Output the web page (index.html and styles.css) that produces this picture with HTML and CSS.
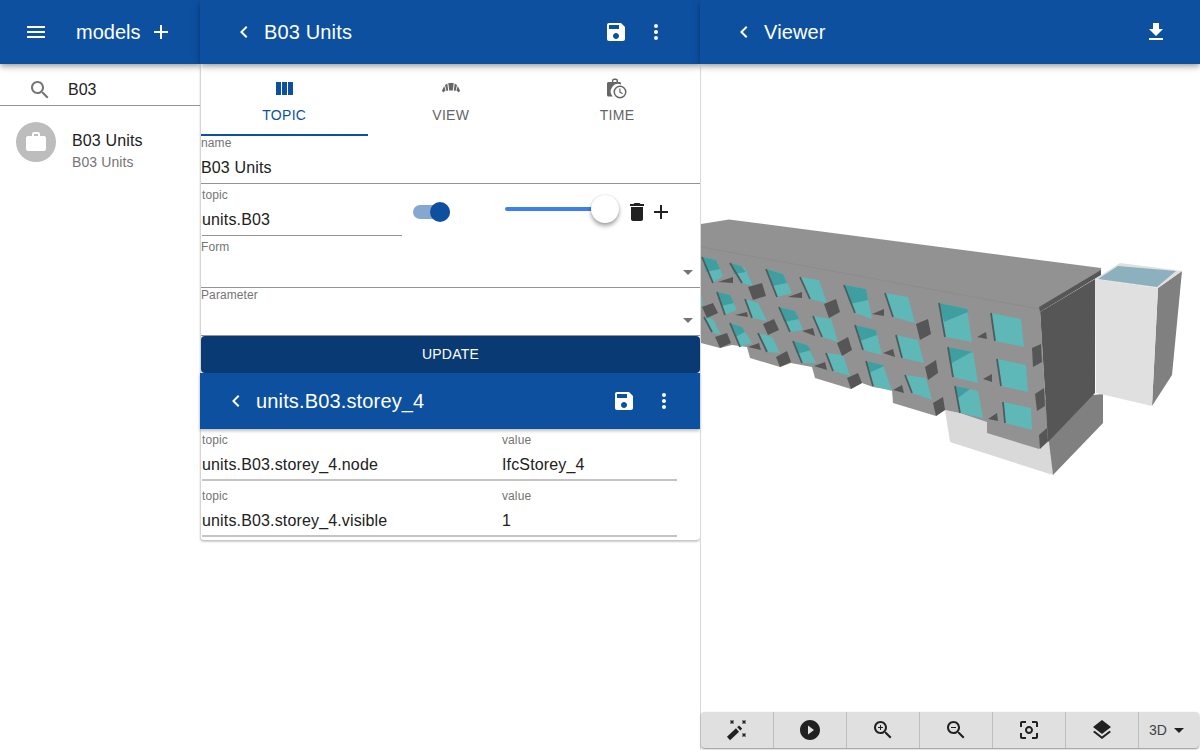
FILE: index.html
```html
<!DOCTYPE html>
<html lang="en">
<head>
<meta charset="utf-8">
<title>B03 Units</title>
<link rel="stylesheet" href="styles.css">
</head>
<body>
<div class="app">
  <section class="col col-left">
    <header class="bar">
      <svg class="ic icon-menu" viewBox="0 0 24 24"><path d="M3 18h18v-2H3v2zm0-5h18v-2H3v2zm0-7v2h18V6H3z"/></svg>
      <span class="bar-title models">models</span>
      <svg class="ic icon-addtop" viewBox="0 0 24 24"><path d="M19 13h-6v6h-2v-6H5v-2h6V5h2v6h6v2z"/></svg>
    </header>
    <div class="search">
      <svg class="ic icon-search" viewBox="0 0 24 24"><path d="M15.5 14h-.79l-.28-.27C15.41 12.59 16 11.11 16 9.5 16 5.91 13.09 3 9.5 3S3 5.91 3 9.5 5.91 16 9.5 16c1.61 0 3.09-.59 4.23-1.57l.27.28v.79l5 4.99L20.49 19l-4.99-5zm-6 0C7.01 14 5 11.99 5 9.5S7.01 5 9.5 5 14 7.01 14 9.5 11.99 14 9.5 14z"/></svg>
      <span class="search-text">B03</span>
    </div>
    <div class="item">
      <div class="avatar"><svg class="ic" viewBox="0 0 24 24"><path d="M20 6h-4V4c0-1.11-.89-2-2-2h-4c-1.11 0-2 .89-2 2v2H4c-1.11 0-1.99.89-1.99 2L2 19c0 1.11.89 2 2 2h16c1.11 0 2-.89 2-2V8c0-1.11-.89-2-2-2zm-6 0h-4V4h4v2z"/></svg></div>
      <div class="item-text">
        <div class="item-title">B03 Units</div>
        <div class="item-sub">B03 Units</div>
      </div>
    </div>
  </section>

  <section class="col col-mid">
    <header class="bar">
      <svg class="ic icon-back" viewBox="0 0 24 24"><path d="M15.41 7.41L14 6l-6 6 6 6 1.41-1.41L10.83 12z"/></svg>
      <span class="bar-title">B03 Units</span>
      <span class="spacer"></span>
      <svg class="ic" viewBox="0 0 24 24"><path d="M17 3H5c-1.11 0-2 .9-2 2v14c0 1.1.89 2 2 2h14c1.1 0 2-.9 2-2V7l-4-4zm-5 16c-1.66 0-3-1.34-3-3s1.34-3 3-3 3 1.34 3 3-1.34 3-3 3zm3-10H5V5h10v4z"/></svg>
      <svg class="ic icon-more" viewBox="0 0 24 24"><path d="M12 8c1.1 0 2-.9 2-2s-.9-2-2-2-2 .9-2 2 .9 2 2 2zm0 2c-1.1 0-2 .9-2 2s.9 2 2 2 2-.9 2-2-.9-2-2-2zm0 6c-1.1 0-2 .9-2 2s.9 2 2 2 2-.9 2-2-.9-2-2-2z"/></svg>
    </header>
    <div class="card">
      <nav class="tabs">
        <div class="tab active">
          <svg class="ic" viewBox="0 0 24 24"><path d="M10 18h5V5h-5v13zm-6 0h5V5H4v13zM16 5v13h5V5h-5z"/></svg>
          <span>Topic</span>
        </div>
        <div class="tab">
          <svg class="ic" viewBox="0 0 24 24"><g transform="translate(0 -1.500)"><path d="M9.300 7.500h5.400l-.9 7.500h-3.600zM6 9.500L8.300 8l.9 7-1.700.5zM18 9.500L15.700 8l-.9 7 1.700.5zM3 15l2.200-4.500 1.400 4.500L4 17zM21 15l-2.200-4.500-1.400 4.500L20 17z"/></g></svg>
          <span>View</span>
        </div>
        <div class="tab">
          <svg class="ic" viewBox="0 0 24 24"><g transform="translate(-2 0)"><path d="M9 3.600c0-1.100 1-2 2.400-2h1.200c1.400 0 2.400.9 2.400 2V5h-1.500V3.800c0-.5-.4-.8-1-.8h-1.200c-.6 0-1 .3-1 .8V5H9zM4 6.500C4 5.700 4.700 5 5.500 5h11c.8 0 1.500.7 1.500 1.500v1a7.500 7.500 0 0 0-8.300 12H5.500C4.700 19.500 4 18.800 4 18z"/><path fill-rule="evenodd" d="M17 8.500a6.500 6.500 0 1 1 0 13 6.500 6.500 0 0 1 0-13zm0 1.500a5 5 0 1 0 0 10 5 5 0 0 0 0-10zm-.7 1.500h1.200v3.200l2.400 1.500-.6 1-3-1.800z"/></g></svg>
          <span>Time</span>
        </div>
      </nav>
      <div class="field">
        <label class="lab">name</label>
        <div class="val">B03 Units</div>
      </div>
      <div class="topic-row">
        <div class="field topic-field">
          <label class="lab">topic</label>
          <div class="val">units.B03</div>
        </div>
        <div class="toggle"><span class="knob"></span></div>
        <div class="slider"><span class="thumb"></span></div>
        <svg class="ic dark icon-trash" viewBox="0 0 24 24"><path d="M6 19c0 1.100.9 2 2 2h8c1.100 0 2-.9 2-2V7H6v12zM19 4h-3.500l-1-1h-5l-1 1H5v2h14V4z"/></svg>
        <svg class="ic dark icon-plus" viewBox="0 0 24 24"><path d="M19 13h-6v6h-2v-6H5v-2h6V5h2v6h6v2z"/></svg>
      </div>
      <div class="field select">
        <label class="lab">Form</label>
        <div class="val empty"></div>
        <span class="caret"></span>
      </div>
      <div class="field select">
        <label class="lab">Parameter</label>
        <div class="val empty"></div>
        <span class="caret"></span>
      </div>
      <button class="update">UPDATE</button>
      <header class="bar sub">
        <svg class="ic icon-back" viewBox="0 0 24 24"><path d="M15.41 7.41L14 6l-6 6 6 6 1.41-1.41L10.83 12z"/></svg>
        <span class="bar-title">units.B03.storey_4</span>
        <span class="spacer"></span>
        <svg class="ic" viewBox="0 0 24 24"><path d="M17 3H5c-1.11 0-2 .9-2 2v14c0 1.1.89 2 2 2h14c1.100 0 2-.9 2-2V7l-4-4zm-5 16c-1.660 0-3-1.340-3-3s1.340-3 3-3 3 1.340 3 3-1.340 3-3 3zm3-10H5V5h10v4z"/></svg>
        <svg class="ic icon-more" viewBox="0 0 24 24"><path d="M12 8c1.100 0 2-.9 2-2s-.9-2-2-2-2 .9-2 2 .9 2 2 2zm0 2c-1.100 0-2 .9-2 2s.9 2 2 2 2-.9 2-2-.9-2-2-2zm0 6c-1.100 0-2 .9-2 2s.9 2 2 2 2-.9 2-2-.9-2-2-2z"/></svg>
      </header>
      <div class="kv">
        <div><label class="lab">topic</label><div class="val">units.B03.storey_4.node</div></div>
        <div><label class="lab">value</label><div class="val">IfcStorey_4</div></div>
      </div>
      <div class="kv">
        <div><label class="lab">topic</label><div class="val">units.B03.storey_4.visible</div></div>
        <div><label class="lab">value</label><div class="val">1</div></div>
      </div>
    </div>
  </section>

  <section class="col col-right">
    <header class="bar">
      <svg class="ic icon-back" viewBox="0 0 24 24"><path d="M15.41 7.41L14 6l-6 6 6 6 1.41-1.41L10.83 12z"/></svg>
      <span class="bar-title">Viewer</span>
      <span class="spacer"></span>
      <svg class="ic icon-dl" viewBox="0 0 24 24"><path d="M19 9h-4V3H9v6H5l7 7 7-7zM5 18v2h14v-2H5z"/></svg>
    </header>
    <div class="canvas">
      <svg class="scene" viewBox="701 64 499 648">
        <!-- lower white block -->
        <polygon class="g-light" points="945,410 950,442 1053,475 1049,430"/>
        <polygon class="g-side" points="1053,475 1103,423 1103,394 1040,400 1049,442"/>
        <!-- tower -->
        <polygon class="g-side" points="1158,288 1182,271 1172,375 1152,406"/>
        <polygon class="g-tower" points="1095,279 1158,288 1152,406 1096,393"/>
        <polygon class="g-frame" points="1120,263 1182,271 1158,288 1095,279"/>
        <polygon class="g-glass" points="1118,266 1176,271 1157,287 1098,279"/>
        <!-- main dark side -->
        <polygon class="g-dark" points="1040,312 1095,279 1095,393 1048,442"/>
        <!-- facade + roof -->
        <polygon class="g-main" points="701,224 729,219.500 1101,268 1101,271 1040,307 1048,442 1039,449 987,433 987,422 960,413 945,410 936,416 893,403 892,390 873,387 862,383 851,389 815,378 812,367 791,363 780,367 750,358 747,347 732,345 720,348 701,343"/>
        <polygon class="g-dark" points="1101,270 1101,275 1040,312 1039,307"/>
        <path class="g-band" d="M701 247L1039 309"/>
        <!-- windows -->
        <g class="wins">
          <polygon points="702,257 716,260 723,276 713,283"/>
          <polygon points="730,263 745,268 753,286 742,283"/>
          <polygon points="766,269 783,274 792,293 777,297"/>
          <polygon points="800,277 819,280 827,303 810,299"/>
          <polygon points="844,285 866,289 872,319 855,313"/>
          <polygon points="885,293 908,297 915,323 893,317"/>
          <polygon points="939,303 967,309 972,342 945,337"/>
          <polygon points="991,313 1021,319 1024,347 995,341"/>
          <polygon points="701,293 703,305 701,306"/>
          <polygon points="717,292 730,295 737,310 725,315"/>
          <polygon points="745,299 758,303 767,321 752,318"/>
          <polygon points="779,307 795,311 803,330 790,332"/>
          <polygon points="813,316 831,319 838,342 822,337"/>
          <polygon points="855,325 876,330 882,355 863,350"/>
          <polygon points="896,335 918,340 924,363 902,358"/>
          <polygon points="948,347 973,352 978,383 953,377"/>
          <polygon points="997,359 1026,365 1028,392 1001,386"/>
          <polygon points="704,317 713,319 721,335 712,332"/>
          <polygon points="730,323 742,327 752,343 740,347"/>
          <polygon points="758,333 772,337 780,353 767,352"/>
          <polygon points="793,341 807,345 816,363 802,363"/>
          <polygon points="826,353 843,355 850,376 833,371"/>
          <polygon points="866,361 883,365 892,391 873,386"/>
          <polygon points="905,375 926,378 932,400 912,393"/>
          <polygon points="955,386 978,391 983,418 960,413"/>
          <polygon points="1003,402 1031,408 1032,430 1005,423"/>
        </g>
        <g class="wtop">
          <polygon points="702,257 716,260 720,269 706,272"/>
          <polygon points="730,263 741,266 746,272 734,274"/>
          <polygon points="766,269 783,274 787,283 772,286"/>
          <polygon points="844,285 866,289 868,300 850,304"/>
          <polygon points="939,303 967,309 968,312 944,322"/>
          <polygon points="717,292 730,295 734,303 721,306"/>
          <polygon points="779,307 795,311 799,319 784,322"/>
          <polygon points="855,325 876,330 877,335 860,341"/>
          <polygon points="948,347 973,352 970,353 950,364"/>
          <polygon points="730,323 742,327 745,332 735,337"/>
          <polygon points="793,341 807,345 811,350 797,354"/>
          <polygon points="866,361 883,365 884,366 869,373"/>
          <polygon points="955,386 970,389 958,398"/>
        </g>
        <path class="wedge" d="M702 257L713 283M730 263L742 283M766 269L777 297M800 277L810 299M844 285L855 313M885 293L893 317M939 303L945 337M991 313L995 341M717 292L725 315M745 299L752 318M779 307L790 332M813 316L822 337M855 325L863 350M896 335L902 358M948 347L953 377M997 359L1001 386M704 317L712 332M730 323L740 347M758 333L767 352M793 341L802 363M826 353L833 371M866 361L873 386M905 375L912 393M955 386L960 413M1003 402L1005 423"/>
        <!-- blocks -->
        <g class="blocks">
          <polygon points="748,287 762,283 766,296 753,300"/>
          <polygon points="824,304 836,299 840,312 829,318"/>
          <polygon points="916,324 928,319 931,334 920,340"/>
          <polygon points="702,307 713,303 718,313 707,318"/>
          <polygon points="763,324 774,319 779,330 768,335"/>
          <polygon points="837,343 848,337 852,350 842,356"/>
          <polygon points="715,337 727,333 731,343 720,348"/>
          <polygon points="776,357 787,351 791,362 780,367"/>
          <polygon points="847,378 858,373 862,383 851,389"/>
          <polygon points="925,367 936,360 938,373 928,380"/>
          <polygon points="933,403 943,397 945,410 936,416"/>
          <polygon points="1032,348 1041,344 1042,362 1033,367"/>
          <polygon points="1035,394 1044,388 1045,406 1037,411"/>
          <polygon points="1039,435 1047,428 1048,441 1040,449"/>
          <polygon points="718,282 733,277 733,283"/>
          <polygon points="788,297 802,292 802,298"/>
          <polygon points="872,314 884,309 884,316"/>
          <polygon points="735,315 747,312 748,317"/>
          <polygon points="802,331 813,328 815,336"/>
          <polygon points="883,353 893,349 895,357"/>
          <polygon points="748,347 759,343 761,350"/>
          <polygon points="814,366 825,362 827,370"/>
          <polygon points="893,390 902,385 904,393"/>
          <polygon points="977,337 986,332 987,339"/>
          <polygon points="983,379 992,374 992,382"/>
          <polygon points="988,419 997,413 998,421"/>
        </g>
      </svg>
    </div>
    <div class="tools">
      <div class="tool">
        <svg class="ic dark" viewBox="0 0 24 24"><path class="wand" d="M3.500 20.500L12.500 12"/><path class="wand-tip" d="M13.800 10.800L15.600 9"/><path class="sparks" d="M5.500 2.500l3 3M8.500 2.500l-3 3M17.500 2.500l3 3M20.500 2.500l-3 3M17.500 15.500l3 3M20.500 15.500l-3 3"/></svg>
      </div>
      <div class="tool"><svg class="ic dark" viewBox="0 0 24 24"><path d="M12 2C6.480 2 2 6.480 2 12s4.480 10 10 10 10-4.480 10-10S17.520 2 12 2zm-2 14.500v-9l6 4.500-6 4.500z"/></svg></div>
      <div class="tool"><svg class="ic dark" viewBox="0 0 24 24"><path d="M15.500 14h-.79l-.28-.27C15.410 12.590 16 11.110 16 9.500 16 5.910 13.090 3 9.500 3S3 5.910 3 9.500 5.910 16 9.500 16c1.610 0 3.090-.59 4.230-1.570l.27.280v.79l5 4.990L20.490 19l-4.990-5zm-6 0C7.010 14 5 11.990 5 9.500S7.010 5 9.500 5 14 7.010 14 9.500 11.990 14 9.500 14z"/><path d="M12 10h-2v2H9v-2H7V9h2V7h1v2h2v1z"/></svg></div>
      <div class="tool"><svg class="ic dark" viewBox="0 0 24 24"><path d="M15.500 14h-.79l-.28-.27C15.410 12.590 16 11.110 16 9.500 16 5.910 13.090 3 9.500 3S3 5.910 3 9.500 5.910 16 9.500 16c1.610 0 3.090-.59 4.230-1.570l.27.280v.79l5 4.990L20.490 19l-4.990-5zm-6 0C7.010 14 5 11.990 5 9.500S7.010 5 9.500 5 14 7.010 14 9.500 11.990 14 9.500 14z"/><path d="M7 9h5v1H7z"/></svg></div>
      <div class="tool"><svg class="ic dark" viewBox="0 0 24 24"><path d="M5 15H3v4c0 1.100.9 2 2 2h4v-2H5v-4zM5 5h4V3H5c-1.100 0-2 .9-2 2v4h2V5zm14-2h-4v2h4v4h2V5c0-1.100-.9-2-2-2zm0 16h-4v2h4c1.100 0 2-.9 2-2v-4h-2v4zM12 8c-2.210 0-4 1.790-4 4s1.790 4 4 4 4-1.790 4-4-1.790-4-4-4zm0 6c-1.100 0-2-.9-2-2s.9-2 2-2 2 .9 2 2-.9 2-2 2z"/></svg></div>
      <div class="tool"><svg class="ic dark" viewBox="0 0 24 24"><path d="M11.990 18.540l-7.370-5.730L3 14.070l9 7 9-7-1.630-1.270-7.380 5.740zM12 16l7.360-5.730L21 9l-9-7-9 7 1.630 1.270L12 16z"/></svg></div>
      <div class="tool last"><span>3D</span><svg class="ic dark" viewBox="0 0 24 24"><path d="M7 10l5 5 5-5z"/></svg></div>
    </div>
  </section>
</div>
</body>
</html>
```
FILE: styles.css
```css
* { box-sizing: border-box; }
html, body { margin: 0; height: 100%; }
body {
  font-family: "Liberation Sans", Arial, sans-serif;
  color: #212121;
  background: #fff;
  overflow: hidden;
}
.app { display: flex; width: 1200px; height: 750px; }
.col { display: flex; flex-direction: column; height: 750px; position: relative; }
.col-left { width: 200px; z-index: 1; }
.col-mid { width: 500px; z-index: 2; }
.col-right { width: 500px; z-index: 3; }

.ic { width: 24px; height: 24px; fill: currentColor; flex: none; display: block; }
.spacer { flex: 1; }

.bar {
  display: flex;
  align-items: center;
  height: 64px;
  flex: none;
  background: #0d50a0;
  color: #fff;
  position: relative;
  z-index: 2;
  box-shadow: 0 2px 4px -1px rgba(0,0,0,.2), 0 4px 5px 0 rgba(0,0,0,.14), 0 1px 10px 0 rgba(0,0,0,.12);
}
.bar-title { font-size: 20px; line-height: 24px; margin-left: 8px; white-space: nowrap; letter-spacing: .15px; }
.col-mid > .bar, .col-right > .bar { padding-left: 32px; }
.col-mid > .bar { padding-right: 32px; }
.col-right > .bar { padding-right: 32px; }
.icon-more { margin-left: 16px; }
.icon-menu { margin-left: 24px; }
.models { margin-left: 28px; letter-spacing: 0; }
.icon-addtop { margin-left: 9px; }

/* left column */
.search {
  display: flex;
  align-items: center;
  height: 42px;
  padding: 10px 0 0 28px;
  border-bottom: 1px solid #949494;
  color: #212121;
}
.icon-search { color: #757575; }
.search-text { margin-left: 16px; font-size: 16px; }
.item { display: flex; align-items: flex-start; padding: 16px 16px 0; }
.avatar {
  width: 40px; height: 40px;
  border-radius: 50%;
  background: #bdbdbd;
  color: #fff;
  display: flex;
  align-items: center;
  justify-content: center;
  flex: none;
}
.item-text { margin-left: 16px; padding-top: 7px; }
.item-title { font-size: 16px; line-height: 24px; letter-spacing: .15px; }
.item-sub { font-size: 14px; line-height: 19px; color: #757575; letter-spacing: .1px; }

/* middle column */
.card {
  background: #fff;
  height: 477px;
  border-left: 1px solid #d6d6d6;
  border-bottom: 1px solid #c8c8c8;
  border-radius: 0 0 4px 4px;
  box-shadow: 0 1px 2px rgba(0,0,0,.2);
}
.tabs { display: grid; grid-template-columns: 166.500px 166.500px 166px; height: 72px; }
.tab {
  display: flex;
  flex-direction: column;
  align-items: center;
  padding-top: 13px;
  color: #666;
  font-size: 14px;
  letter-spacing: .3px;
  text-transform: uppercase;
  font-weight: 400;
}
.tab span { margin-top: 5px; line-height: 18px; }
.tab.active { color: #0d50a0; border-bottom: 2px solid #0d50a0; }

.field { border-bottom: 1px solid #949494; height: 48px; position: relative; }
.lab { display: block; font-size: 12px; line-height: 14px; color: #757575; letter-spacing: .1px; }
.val { font-size: 16px; line-height: 24px; margin-top: 6px; color: #212121; white-space: nowrap; letter-spacing: .15px; }
.val.empty { height: 24px; }

.topic-row { display: flex; align-items: flex-start; height: 56px; padding-left: 1px; }
.topic-field { width: 200px; height: 52px; padding-top: 4px; }
.toggle {
  width: 37px; height: 14px;
  margin: 21px 0 0 11px;
  border-radius: 7px;
  background: #86a7d0;
  position: relative;
}
.knob {
  position: absolute;
  right: 0; top: -3px;
  width: 20px; height: 20px;
  border-radius: 50%;
  background: #0d50a0;
}
.slider {
  width: 100px; height: 4px;
  margin: 23px 0 0 55px;
  border-radius: 2px;
  background: #3b7ff0;
  position: relative;
}
.thumb {
  position: absolute;
  right: -14px; top: -12px;
  width: 28px; height: 28px;
  border-radius: 50%;
  background: #fff;
  box-shadow: 0 3px 4px rgba(0,0,0,.35), 0 0 2px rgba(0,0,0,.15);
}
.dark { color: #212121; }
.icon-trash { margin: 16px 0 0 20px; }
.icon-plus { margin-top: 16px; }

.caret {
  position: absolute;
  right: 7px; bottom: 12px;
  border-left: 5px solid transparent;
  border-right: 5px solid transparent;
  border-top: 5px solid #757575;
}

.update {
  display: block;
  width: 499px; height: 37px;
  border: 0;
  border-radius: 4px;
  padding: 0;
  background: #0a3a73;
  color: #fff;
  font: 400 14px/37px "Liberation Sans", Arial, sans-serif;
  letter-spacing: .2px;
}
.bar.sub { height: 56px; margin-left: -1px; padding: 0 24px; box-shadow: 0 2px 3px rgba(0,0,0,.25); }
.kv {
  display: grid;
  grid-template-columns: 300px 175px;
  width: 475px;
  height: 52px;
  margin: 0 0 4px 1px;
  padding-top: 4px;
  border-bottom: 2px solid #c4c4c4;
}

/* right column */
.col-right { border-left: 1px solid #d9d9d9; }
.col-right > .bar { margin-left: -1px; }
.canvas { flex: 1; min-height: 0; }
.scene { display: block; width: 499px; height: 648px; }
.g-light { fill: #d9d9d9; }
.g-side { fill: #808080; }
.g-tower { fill: #e0e0e0; }
.g-frame { fill: #e0e0e0; }
.g-glass { fill: #8db0bf; }
.g-dark { fill: #565656; }
.g-main { fill: #929292; }
.g-band { stroke: #8c8c8c; stroke-width: 1; fill: none; }
.wins polygon { fill: #5fb8b8; }
.wtop polygon { fill: #3f9fa0; }
.wedge { stroke: #4f5c5c; stroke-width: 1.800; fill: none; }
.blocks polygon { fill: #565656; }

.tools {
  display: flex;
  height: 36px;
  flex: none;
  margin: 0 1px 2px 0;
  background: #e0e0e0;
  border-radius: 4px;
  box-shadow: 0 1px 2px rgba(0,0,0,.45);
}
.tool {
  width: 73px;
  display: flex;
  align-items: center;
  justify-content: center;
  border-right: 1px solid #bdbdbd;
  color: #212121;
}
.tool.last { flex: 1; justify-content: flex-start; border-right: 0; font-size: 14px; color: #424242; padding-left: 10px; }
.sparks { stroke: #212121; stroke-width: 1.300; fill: none; }
.wand { stroke: #212121; stroke-width: 4.500; fill: none; }
.wand-tip { stroke: #212121; stroke-width: 4.500; fill: none; }
```
